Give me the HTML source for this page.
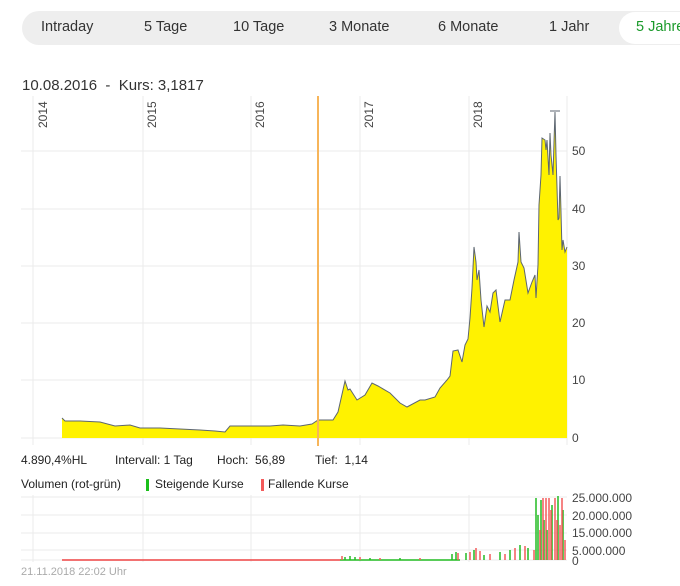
<!DOCTYPE html>
<html><head><meta charset="utf-8"><style>
*{margin:0;padding:0;box-sizing:border-box}
body{width:680px;height:586px;background:#fff;font-family:"Liberation Sans",sans-serif;color:#333;position:relative;overflow:hidden}
.tabs{position:absolute;left:22px;top:11px;width:700px;height:34px;background:#eee;border-radius:17px}
.t{position:absolute;top:19px;font-size:14.5px;color:#333;white-space:nowrap}
.act{position:absolute;left:619px;top:12px;width:80px;height:32px;background:#fff;border-radius:16px}
.title{position:absolute;left:22px;top:77px;font-size:15px;color:#333}
.s{position:absolute;font-size:12px;color:#222;white-space:nowrap}
</style></head><body>
<div class="tabs"></div>
<div class="act"></div>
<div class="t" style="left:41px">Intraday</div>
<div class="t" style="left:144px">5 Tage</div>
<div class="t" style="left:233px">10 Tage</div>
<div class="t" style="left:329px">3 Monate</div>
<div class="t" style="left:438px">6 Monate</div>
<div class="t" style="left:549px">1 Jahr</div>
<div class="t" style="left:636px;color:#1a9a2a">5 Jahre</div>
<div class="title">10.08.2016&nbsp; - &nbsp;Kurs: 3,1817</div>
<svg style="position:absolute;left:0;top:0" width="680" height="586">
<g stroke="#ebebeb" stroke-width="1">
<line x1="21" y1="151" x2="567" y2="151"/><line x1="21" y1="209" x2="567" y2="209"/><line x1="21" y1="266" x2="567" y2="266"/><line x1="21" y1="323" x2="567" y2="323"/><line x1="21" y1="380" x2="567" y2="380"/><line x1="21" y1="438" x2="567" y2="438"/>
<line x1="33" y1="96" x2="33" y2="445"/><line x1="143" y1="96" x2="143" y2="445"/><line x1="251" y1="96" x2="251" y2="445"/><line x1="360" y1="96" x2="360" y2="445"/><line x1="469" y1="96" x2="469" y2="445"/><line x1="567" y1="96" x2="567" y2="445"/>
<line x1="21" y1="497" x2="567" y2="497"/><line x1="21" y1="515" x2="567" y2="515"/><line x1="21" y1="533" x2="567" y2="533"/><line x1="21" y1="550" x2="567" y2="550"/><line x1="21" y1="560" x2="567" y2="560"/>
<line x1="33" y1="495" x2="33" y2="562"/><line x1="143" y1="495" x2="143" y2="562"/><line x1="251" y1="495" x2="251" y2="562"/><line x1="360" y1="495" x2="360" y2="562"/><line x1="469" y1="495" x2="469" y2="562"/>
</g>
<g font-size="12" fill="#444" font-family="Liberation Sans,sans-serif">
<text transform="translate(47,128) rotate(-90)">2014</text>
<text transform="translate(156,128) rotate(-90)">2015</text>
<text transform="translate(264,128) rotate(-90)">2016</text>
<text transform="translate(373,128) rotate(-90)">2017</text>
<text transform="translate(482,128) rotate(-90)">2018</text>
<text x="572" y="155">50</text><text x="572" y="213">40</text><text x="572" y="270">30</text><text x="572" y="327">20</text><text x="572" y="384">10</text><text x="572" y="442">0</text>
<text x="572" y="502">25.000.000</text><text x="572" y="520">20.000.000</text><text x="572" y="537">15.000.000</text><text x="572" y="555">5.000.000</text><text x="572" y="565">0</text>
</g>
<path id="p" fill="#fff200" stroke="none" d="M62,438 L62,418 65,421 80,421 100,422 115,426 130,425 140,428 160,428 200,430 215,431 225,432 230,426 240,426 270,426 283,425 300,426 312,424 318,420 333,420 338,412 345,381 348,390 350,389 357,400 365,395 372,383 378,386 390,393 400,403 407,407 420,400 425,400 435,397 440,388 447,380 450,376 453,351 458,350 462,362 465,345 468,339 470,318 472,288 474,247 476,262 477,280 479,270 481,300 484,327 487,306 490,312 493,293 496,290 500,322 505,300 510,300 514,280 518,262 519,232 521,262 524,268 528,293 532,282 535,275 536,298 538,265 539,205 541,175 542,138 545,140 546,150 547,140 549,175 550,133 551,155 553,175 554,142 555,112 556,155 558,220 559,218 560,176 561,212 562,250 563,240 565,252 567,247 567,438 Z"/>
<path fill="none" stroke="#5d6670" stroke-width="1" d="M62,418 65,421 80,421 100,422 115,426 130,425 140,428 160,428 200,430 215,431 225,432 230,426 240,426 270,426 283,425 300,426 312,424 318,420 333,420 338,412 345,381 348,390 350,389 357,400 365,395 372,383 378,386 390,393 400,403 407,407 420,400 425,400 435,397 440,388 447,380 450,376 453,351 458,350 462,362 465,345 468,339 470,318 472,288 474,247 476,262 477,280 479,270 481,300 484,327 487,306 490,312 493,293 496,290 500,322 505,300 510,300 514,280 518,262 519,232 521,262 524,268 528,293 532,282 535,275 536,298 538,265 539,205 541,175 542,138 545,140 546,150 547,140 549,175 550,133 551,155 553,175 554,142 555,112 556,155 558,220 559,218 560,176 561,212 562,250 563,240 565,252 567,247"/>
<line x1="550" y1="111" x2="560" y2="111" stroke="#5d6670"/>
<line x1="318" y1="96" x2="318" y2="446" stroke="#f7b55a" stroke-width="2"/>
<g stroke-width="1.5">
<line x1="62" y1="560" x2="340" y2="560" stroke="#e44"/>
<line x1="340" y1="560" x2="460" y2="560" stroke="#2b2"/>
<path stroke="#2b2" d="M345,560v-3M350,560v-4M355,560v-3M370,560v-2M400,560v-2M452,560v-6M456,560v-8M466,560v-7M474,560v-10M484,560v-5M500,560v-8M510,560v-10M520,560v-15M528,560v-12M536,560v-62M538,560v-45M541,560v-60M544,560v-40M547,560v-30M552,560v-55M558,560v-64M563,560v-50"/>
<path stroke="#f45b5b" d="M342,560v-4M360,560v-3M380,560v-2M420,560v-2M458,560v-7M470,560v-8M476,560v-12M480,560v-9M490,560v-6M505,560v-6M515,560v-12M525,560v-14M534,560v-10M540,560v-30M543,560v-62M546,560v-62M549,560v-62M551,560v-50M555,560v-62M557,560v-40M560,560v-35M562,560v-62M565,560v-20"/>
</g>
</svg>
<div class="s" style="left:21px;top:453px">4.890,4%HL</div>
<div class="s" style="left:115px;top:453px">Intervall: 1 Tag</div>
<div class="s" style="left:217px;top:453px">Hoch:&nbsp; 56,89</div>
<div class="s" style="left:315px;top:453px">Tief:&nbsp; 1,14</div>
<div class="s" style="left:21px;top:477px">Volumen (rot-grün)</div>
<div style="position:absolute;left:146px;top:479px;width:3px;height:12px;background:#1bbf1b"></div>
<div class="s" style="left:155px;top:477px">Steigende Kurse</div>
<div style="position:absolute;left:261px;top:479px;width:3px;height:12px;background:#f45b5b"></div>
<div class="s" style="left:268px;top:477px">Fallende Kurse</div>
<div class="s" style="left:21px;top:566px;color:#aaa;font-size:11px">21.11.2018 22:02 Uhr</div>
</body></html>
